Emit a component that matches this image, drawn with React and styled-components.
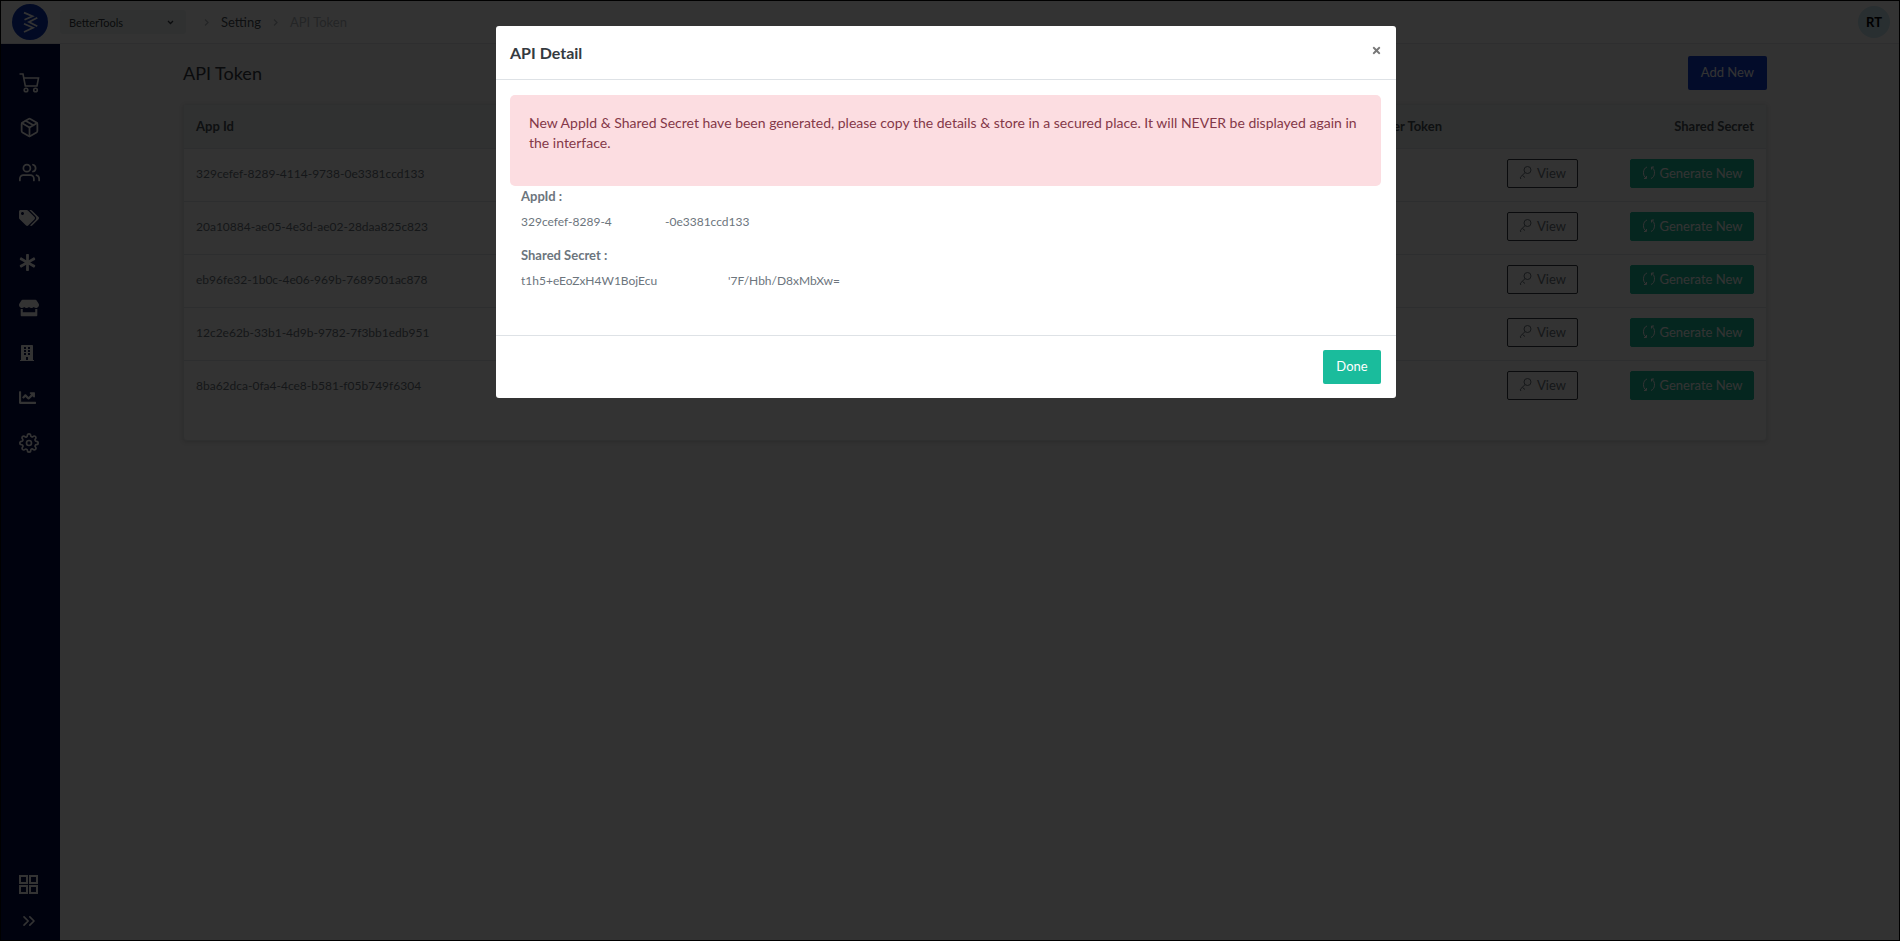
import React from "react";
import styled, { createGlobalStyle } from "styled-components";
import { FiPackage, FiUsers, FiChevronsRight, FiSettings } from "react-icons/fi";
import {
  FaTags,
  FaAsterisk,
  FaStore,
  FaBuilding,
  FaChartLine,
  FaTimes
} from "react-icons/fa";

const GlobalStyle = createGlobalStyle`
  * {
    box-sizing: border-box;
  }
  body {
    margin: 0;
    background: #f7f7f7;
    color: #6c757d;
    font-family: Lato, "Open Sans", sans-serif;
    font-size: 13px;
    line-height: 20px;
  }
  button, select {
    font-family: inherit;
    font-size: 13px;
  }
`;

const Page = styled.div`
  display: flex;
  flex-direction: column;
  min-height: 100vh;
  border: 1px solid #000;
`;
const TopBar = styled.header`
  display: flex;
  align-items: center;
  height: 43px;
  padding: 0 9px 0 11px;
  background: #fff;
  border-bottom: 1px solid #e4e7ea;
`;
const Logo = styled.svg`
  width: 36px;
  height: 36px;
  margin-right: 12px;
`;
const StorePicker = styled.div`
  position: relative;
  width: 126px;
  color: #343a40;

  svg {
    position: absolute;
    right: 12px;
    top: 9px;
    pointer-events: none;
  }
`;
const StoreSelect = styled.select`
  width: 100%;
  height: 24px;
  padding: 0 9px;
  border: 0;
  border-radius: 3px;
  background: #eef5f3;
  color: inherit;
  font-size: 11px;
  appearance: none;
`;
const Breadcrumb = styled.nav`
  display: flex;
  align-items: center;
  flex: 1;
  gap: 11px;
  margin-left: 17px;
  color: #b4b9be;

  a {
    color: #495057;
    text-decoration: none;
  }
`;
const Avatar = styled.div`
  width: 32px;
  height: 32px;
  border-radius: 50%;
  background: #cde8f2;
  color: #000;
  font-weight: 700;
  line-height: 32px;
  text-align: center;
`;
const Body = styled.div`
  display: flex;
  flex: 1;
`;
const Sidebar = styled.nav`
  display: flex;
  flex-direction: column;
  justify-content: space-between;
  width: 59px;
  padding: 16px 0 1px;
  background: #000a46;
`;
const NavGroup = styled.div`
  display: flex;
  flex-direction: column;
`;
const NavLink = styled.a`
  display: flex;
  align-items: center;
  height: ${props => props.$height || 45}px;
  padding-left: 18px;
  color: #fff;
`;
const Content = styled.main`
  flex: 1;
  padding: 12px 132px 0 123px;
`;
const TitleRow = styled.div`
  display: flex;
  justify-content: space-between;
  margin-bottom: 14px;
`;
const Title = styled.h1`
  margin: 0;
  color: #343a40;
  font-size: 18px;
  font-weight: 400;
  line-height: 34px;
`;
const Button = styled.button`
  height: 34px;
  padding: 0 13px 2px;
  border: 0;
  border-radius: 2px;
  background: ${props => props.$color || "#1abc9c"};
  color: #fff;
`;
const SmallButton = styled.button`
  display: inline-flex;
  align-items: center;
  justify-content: center;
  gap: 4px;
  width: ${props => (props.$outline ? 71 : 124)}px;
  height: 29px;
  padding: 0 0 2px;
  border: 1px solid ${props => (props.$outline ? "#343a40" : "#1abc9c")};
  border-radius: 2px;
  background: ${props => (props.$outline ? "transparent" : "#1abc9c")};
  color: ${props => (props.$outline ? "#6c757d" : "#fff")};
  vertical-align: middle;
`;
const Card = styled.section`
  padding-bottom: 27px;
  border: 1px solid #e6e9eb;
  border-radius: 4px;
  background: #fff;
  box-shadow: 0 1px 4px rgba(0, 0, 0, 0.15);
`;
const Table = styled.table`
  width: 100%;
  border-collapse: collapse;

  th,
  td {
    padding: 0 12px;
    text-align: right;
  }
  th:first-child,
  td:first-child {
    text-align: left;
  }
  th {
    height: 43px;
    background: #f0f6f5;
    color: #495057;
    font-weight: 700;
  }
  td {
    height: 53px;
    padding-bottom: 2px;
    border-top: 1px solid #e2e5e8;
    font-size: 12px;
  }
`;
const Column = styled.col`
  width: ${props => props.$width || "auto"};
`;

const Overlay = styled.div`
  position: fixed;
  inset: 0;
  display: flex;
  align-items: flex-start;
  justify-content: center;
  padding-top: 26px;
  background: rgba(0, 0, 0, 0.8);
`;
const Modal = styled.div`
  width: 900px;
  max-width: 95%;
  margin-right: 8px;
  border-radius: 3px;
  background: #fff;
`;
const ModalHeader = styled.header`
  display: flex;
  align-items: center;
  justify-content: space-between;
  height: 54px;
  padding: 0 14px;
  border-bottom: 1px solid #dee2e6;
`;
const ModalTitle = styled.h2`
  margin: 0;
  color: #343a40;
  font-size: 16px;
  font-weight: 700;
`;
const CloseButton = styled.button`
  display: flex;
  padding: 0 0 4px;
  border: 0;
  background: none;
  color: #777;
`;
const ModalBody = styled.div`
  padding: 15px 15px 44px 14px;
`;
const Alert = styled.div`
  min-height: 91px;
  padding: 18px 19px;
  border-radius: 5px;
  background: #fcdde1;
  color: #843848;
  font-size: 14px;
`;
const Details = styled.dl`
  margin: 0;
  padding-left: 11px;

  dt {
    font-weight: 700;
  }
  dd {
    display: flex;
    margin: 6px 0 13px;
    font-size: 12px;
    white-space: nowrap;
  }
  dd:last-child {
    margin-bottom: 0;
  }
`;
const Piece = styled.span`
  min-width: ${props => props.$width || 0}px;
`;
const ModalFooter = styled.footer`
  display: flex;
  justify-content: flex-end;
  padding: 14px 15px;
  border-top: 1px solid #dee2e6;
`;
const DoneButton = styled(Button)`
  width: 58px;
`;

const Chevron = ({ down }) => (
  <svg width="7" height="7" viewBox="0 0 7 7" fill="none" stroke="currentColor">
    <path d={down ? "M1 2l2.5 2.5L6 2" : "M2 .5l3 3-3 3"} strokeWidth="1.3" />
  </svg>
);

const CartIcon = () => (
  <svg width="21" height="20" viewBox="0 0 21 20" fill="none" stroke="currentColor">
    <path d="M.5 1H4l2.300 12h11.700l1.500-8H5" strokeWidth="1.6" />
    <circle cx="7" cy="17" r="1.8" strokeWidth="1.6" />
    <circle cx="16.5" cy="17" r="1.8" strokeWidth="1.6" />
  </svg>
);

const GridIcon = () => (
  <svg width="20" height="20" viewBox="0 0 20 20" fill="none" stroke="currentColor">
    <path d="M1 1h7v7H1zM11 1h7v7h-7zM1 11h7v7H1zM11 11h7v7h-7z" strokeWidth="2" />
  </svg>
);

const KeyIcon = () => (
  <svg width="14" height="16" viewBox="0 0 14 16" fill="none" stroke="currentColor">
    <circle cx="8.5" cy="5" r="3.500" />
    <path d="M6.200 7.500L2 11.500q-1.500 1.500 0 2.500M3.500 10.500l2.500 2" />
  </svg>
);

const RefreshIcon = () => (
  <svg width="14" height="16" viewBox="0 0 14 16" fill="none" stroke="currentColor">
    <path d="M5 2C.5 3.500.5 11 4 13M2 13.500h2.500V11M9 13.500C13.500 12 13.500 4.500 10 2.500M12 2H9.500v2.500" />
  </svg>
);

const links = [
  { name: "Orders", icon: <CartIcon /> },
  { name: "Products", icon: <FiPackage size={21} /> },
  { name: "Customers", icon: <FiUsers size={21} /> },
  { name: "Promotions", icon: <FaTags size={20} /> },
  { name: "Extras", icon: <FaAsterisk size={17} /> },
  { name: "Stores", icon: <FaStore size={20} /> },
  { name: "Company", icon: <FaBuilding size={16} /> },
  { name: "Reports", icon: <FaChartLine size={17} /> },
  { name: "Settings", icon: <FiSettings size={20} /> }
];

const tokens = [
  "329cefef-8289-4114-9738-0e3381ccd133",
  "20a10884-ae05-4e3d-ae02-28daa825c823",
  "eb96fe32-1b0c-4e06-969b-7689501ac878",
  "12c2e62b-33b1-4d9b-9782-7f3bb1edb951",
  "8ba62dca-0fa4-4ce8-b581-f05b749f6304"
];

export default class App extends React.Component {
  render() {
    return (
      <>
        <GlobalStyle />
        <Page>
          <TopBar>
            <Logo viewBox="0 0 36 36">
              <circle cx="18" cy="18" r="18" fill="#0a34b4" />
              <path
                d="M12 8.700l8.500 3.500-8 3.600M25.300 13.700L17 18l8.300 4.300M12 19.700l9 4-9 4.300"
                fill="none"
                stroke="#fff"
                strokeWidth="1.800"
              />
            </Logo>
            <StorePicker>
              <StoreSelect aria-label="Store">
                <option>BetterTools</option>
              </StoreSelect>
              <Chevron down />
            </StorePicker>
            <Breadcrumb aria-label="Breadcrumb">
              <Chevron />
              <a href="#setting">Setting</a>
              <Chevron />
              <span>API Token</span>
            </Breadcrumb>
            <Avatar>RT</Avatar>
          </TopBar>
          <Body>
            <Sidebar aria-label="Main">
              <NavGroup>
                {links.map(link => (
                  <NavLink key={link.name} href="#" aria-label={link.name}>
                    {link.icon}
                  </NavLink>
                ))}
              </NavGroup>
              <NavGroup>
                <NavLink href="#" aria-label="Apps" $height={36}>
                  <GridIcon />
                </NavLink>
                <NavLink href="#" aria-label="Expand" $height={36}>
                  <FiChevronsRight size={20} />
                </NavLink>
              </NavGroup>
            </Sidebar>
            <Content>
              <TitleRow>
                <Title>API Token</Title>
                <Button $color="#0f3ccf">Add New</Button>
              </TitleRow>
              <Card>
                <Table>
                  <colgroup>
                    <Column />
                    <Column $width="400px" />
                    <Column $width="136px" />
                    <Column $width="176px" />
                  </colgroup>
                  <thead>
                    <tr>
                      <th>App Id</th>
                      <th>User Token</th>
                      <th></th>
                      <th>Shared Secret</th>
                    </tr>
                  </thead>
                  <tbody>
                    {tokens.map(token => (
                      <tr key={token}>
                        <td>{token}</td>
                        <td></td>
                        <td>
                          <SmallButton $outline>
                            <KeyIcon />
                            View
                          </SmallButton>
                        </td>
                        <td>
                          <SmallButton>
                            <RefreshIcon />
                            Generate New
                          </SmallButton>
                        </td>
                      </tr>
                    ))}
                  </tbody>
                </Table>
              </Card>
            </Content>
          </Body>
        </Page>
        <Overlay>
          <Modal role="dialog" aria-labelledby="api-detail">
            <ModalHeader>
              <ModalTitle id="api-detail">API Detail</ModalTitle>
              <CloseButton aria-label="Close">
                <FaTimes size={11} />
              </CloseButton>
            </ModalHeader>
            <ModalBody>
              <Alert role="alert">
                New AppId &amp; Shared Secret have been generated, please copy
                the details &amp; store in a secured place. It will NEVER be
                displayed again in the interface.
              </Alert>
              <Details>
                <dt>AppId :</dt>
                <dd>
                  <Piece $width={144}>329cefef-8289-4</Piece>
                  <Piece>-0e3381ccd133</Piece>
                </dd>
                <dt>Shared Secret :</dt>
                <dd>
                  <Piece $width={207}>t1h5+eEoZxH4W1BojEcu</Piece>
                  <Piece>'7F/Hbh/D8xMbXw=</Piece>
                </dd>
              </Details>
            </ModalBody>
            <ModalFooter>
              <DoneButton>Done</DoneButton>
            </ModalFooter>
          </Modal>
        </Overlay>
      </>
    );
  }
}
